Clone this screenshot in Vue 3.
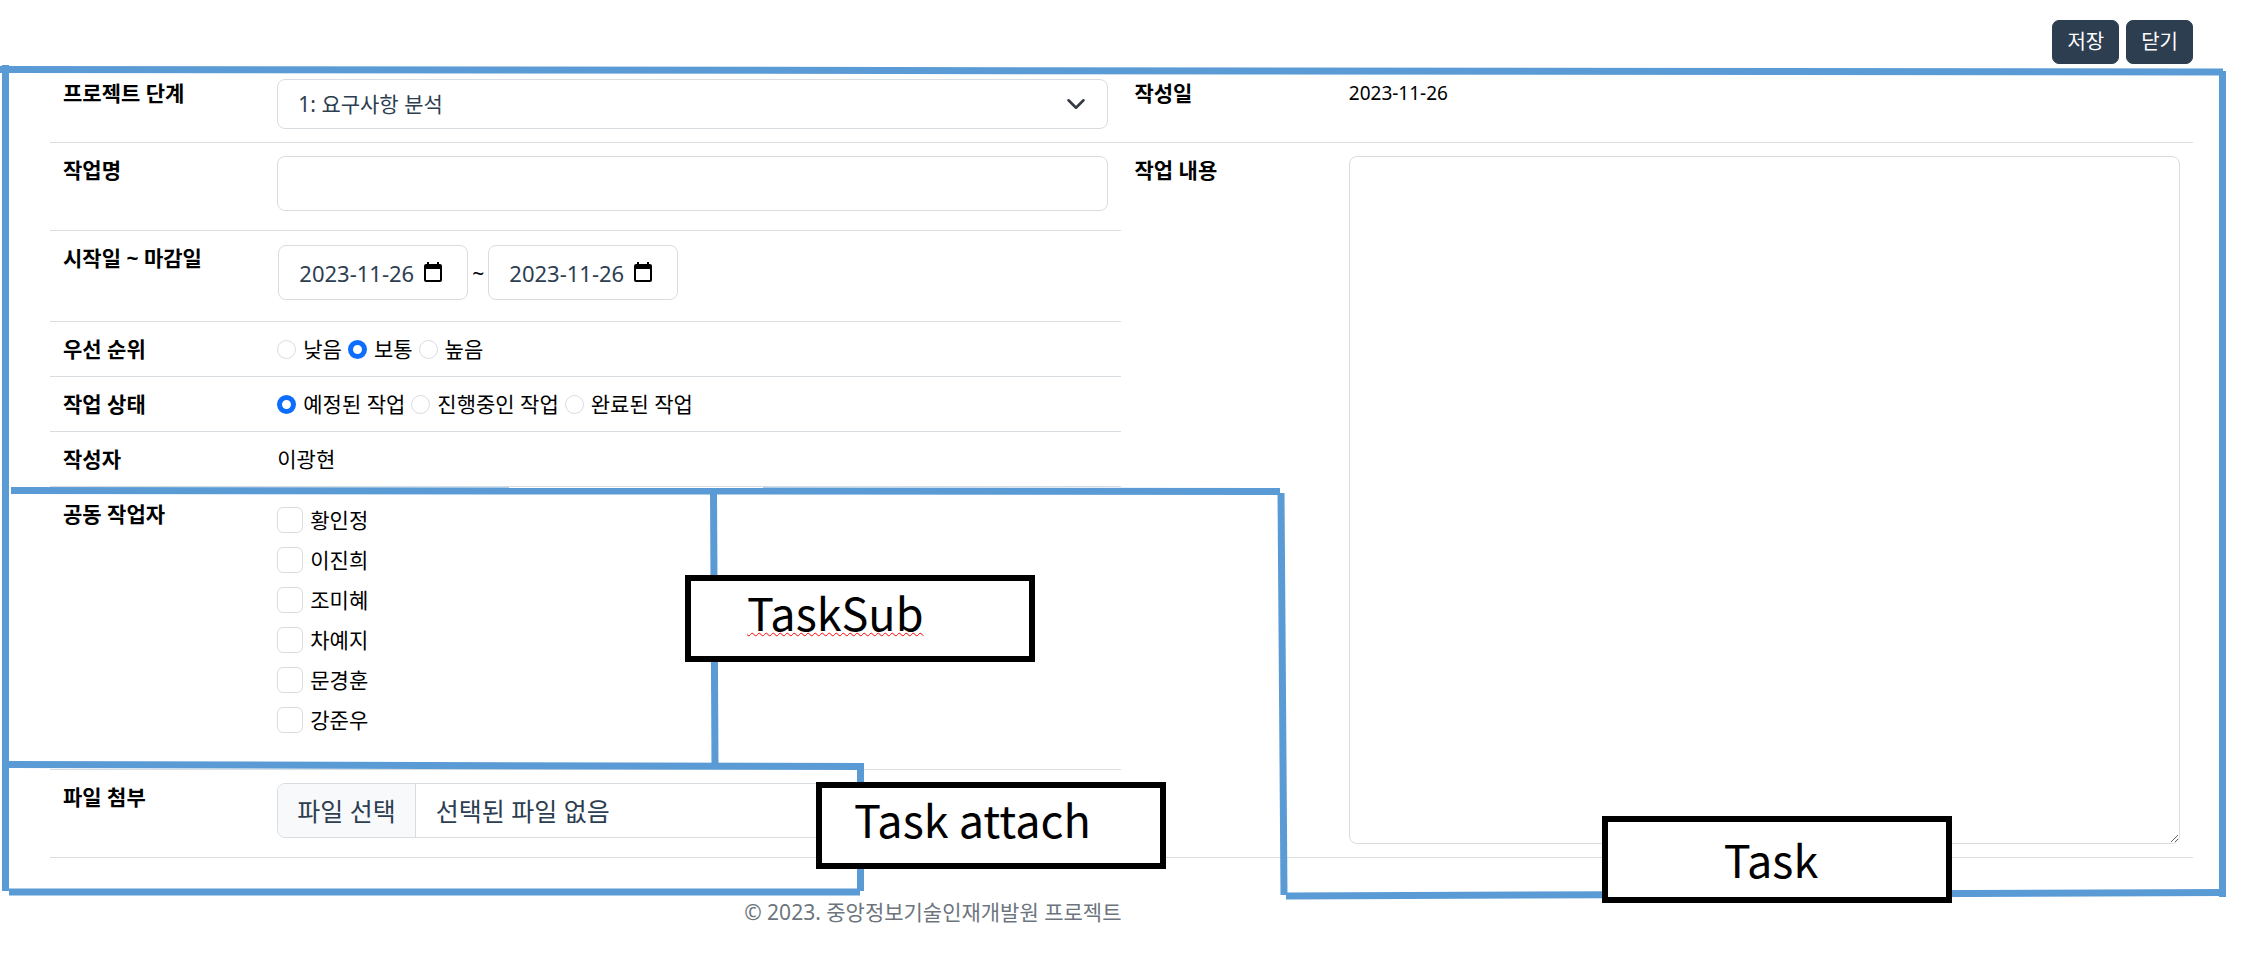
<script setup>
import { ref } from 'vue'

const stage = ref('1')
const title = ref('')
const content = ref('')
const startDate = ref('2023-11-26')
const endDate = ref('2023-11-26')
const priority = ref('보통')
const status = ref('예정된 작업')
const coworkers = ref([])

const priorities = ['낮음', '보통', '높음']
const statuses = ['예정된 작업', '진행중인 작업', '완료된 작업']
const members = ['황인정', '이진희', '조미혜', '차예지', '문경훈', '강준우']
</script>

<template>
  <div class="page">
    <header class="actions">
      <button type="button" class="btn">저장</button>
      <button type="button" class="btn">닫기</button>
    </header>

    <form class="task-form" @submit.prevent>
      <table class="grid">
        <colgroup>
          <col class="col-label" />
          <col class="col-value" />
          <col class="col-label" />
          <col class="col-value" />
        </colgroup>
        <tbody>
          <tr class="row-stage">
            <th scope="row"><label for="stage">프로젝트 단계</label></th>
            <td>
              <div class="select-wrap">
                <select id="stage" v-model="stage" class="control select">
                  <option value="1">1: 요구사항 분석</option>
                </select>
                <svg class="chevron" viewBox="0 0 16 16" aria-hidden="true">
                  <path d="m2 5 6 6 6-6" fill="none" stroke="#343a40" stroke-width="2" stroke-linecap="round" stroke-linejoin="round" />
                </svg>
              </div>
            </td>
            <th scope="row">작성일</th>
            <td class="written">2023-11-26</td>
          </tr>
          <tr class="row-title">
            <th scope="row"><label for="title">작업명</label></th>
            <td><input id="title" v-model="title" type="text" class="control" /></td>
            <th scope="row" rowspan="7"><label for="content">작업 내용</label></th>
            <td rowspan="7"><textarea id="content" v-model="content" class="control area"></textarea></td>
          </tr>
          <tr class="row-dates">
            <th scope="row">시작일 ~ 마감일</th>
            <td>
              <div class="dates">
                <div class="date">
                  <input v-model="startDate" type="text" class="control" aria-label="시작일" />
                  <svg class="calendar" viewBox="0 0 18 20" aria-hidden="true">
                    <path d="M3 0h2v2h8V0h2v2h1a2 2 0 0 1 2 2v14a2 2 0 0 1-2 2H2a2 2 0 0 1-2-2V4a2 2 0 0 1 2-2h1zM2 7v11h14V7z" fill-rule="evenodd" />
                  </svg>
                </div>
                <span class="tilde">~</span>
                <div class="date">
                  <input v-model="endDate" type="text" class="control" aria-label="마감일" />
                  <svg class="calendar" viewBox="0 0 18 20" aria-hidden="true">
                    <path d="M3 0h2v2h8V0h2v2h1a2 2 0 0 1 2 2v14a2 2 0 0 1-2 2H2a2 2 0 0 1-2-2V4a2 2 0 0 1 2-2h1zM2 7v11h14V7z" fill-rule="evenodd" />
                  </svg>
                </div>
              </div>
            </td>
          </tr>
          <tr class="row-line">
            <th scope="row">우선 순위</th>
            <td>
              <div class="radios">
                <label v-for="p in priorities" :key="p" class="choice">
                  <input v-model="priority" type="radio" name="priority" :value="p" />{{ p }}
                </label>
              </div>
            </td>
          </tr>
          <tr class="row-line">
            <th scope="row">작업 상태</th>
            <td>
              <div class="radios">
                <label v-for="s in statuses" :key="s" class="choice">
                  <input v-model="status" type="radio" name="status" :value="s" />{{ s }}
                </label>
              </div>
            </td>
          </tr>
          <tr class="row-line">
            <th scope="row">작성자</th>
            <td>이광현</td>
          </tr>
          <tr class="row-members">
            <th scope="row">공동 작업자</th>
            <td>
              <div class="checks">
                <label v-for="m in members" :key="m" class="choice">
                  <input v-model="coworkers" type="checkbox" :value="m" />{{ m }}
                </label>
              </div>
            </td>
          </tr>
          <tr class="row-file">
            <th scope="row">파일 첨부</th>
            <td>
              <label class="control file">
                <input type="file" class="file-input" />
                <span class="file-button">파일 선택</span>
                <span class="file-name">선택된 파일 없음</span>
              </label>
            </td>
          </tr>
        </tbody>
      </table>
    </form>

    <footer class="footer">© 2023. 중앙정보기술인재개발원 프로젝트</footer>

    <svg class="regions" viewBox="0 0 2265 961" preserveAspectRatio="none" aria-hidden="true">
      <g stroke="#5b9bd5" stroke-width="7">
        <path d="M0 69.5 2223 72" />
        <path d="M5.5 65V891" />
        <path d="M2222.5 71V897" />
        <path d="M11 490.5 1280 491.5" />
        <path d="M1281 493 1284 895" />
        <path d="M713.5 491 715 766" />
        <path d="M9 764.5 864 766.5" />
        <path d="M860.5 763V891" />
        <path d="M9 892H860" />
        <path d="M1286 896 2223 892.5" />
      </g>
    </svg>
    <div class="tag tag-sub"><span class="misspelt">TaskSub</span></div>
    <div class="tag tag-attach">Task attach</div>
    <div class="tag tag-task">Task</div>
  </div>
</template>

<style>
body {
  margin: 0;
  background: #fff;
}
</style>

<style scoped>
.page {
  position: relative;
  box-sizing: border-box;
  padding: 20px 72px 32px 50px;
  font-family: "Noto Sans", "Noto Sans CJK KR", sans-serif;
  font-size: 21px;
  line-height: 28px;
  color: #000;
}
.page * {
  box-sizing: border-box;
}
.actions {
  display: flex;
  justify-content: flex-end;
  gap: 7px;
  margin-bottom: 2px;
}
.btn {
  height: 44px;
  padding: 0 14px;
  border: 1px solid #2c3e50;
  border-radius: 7px;
  background: #2c3e50;
  color: #fff;
  font: inherit;
  font-size: 20px;
}
.grid {
  width: 100%;
  table-layout: fixed;
  border-collapse: separate;
  border-spacing: 0;
}
.col-label {
  width: 10%;
}
.col-value {
  width: 40%;
}
th,
td {
  padding: 13px;
  border-bottom: 1px solid #d8dde2;
  text-align: left;
  vertical-align: top;
  font-weight: 400;
}
th {
  font-weight: 700;
}
.written {
  font-size: 19px;
}
.row-stage {
  height: 77px;
}
.row-title {
  height: 88px;
}
.row-dates {
  height: 91px;
}
.row-line {
  height: 55px;
}
.row-members {
  height: 283px;
}
.row-file {
  height: 88px;
}
.control {
  display: block;
  width: 100%;
  height: 55px;
  padding: 0 20px;
  border: 1px solid #d8dde2;
  border-radius: 8px;
  background: #fff;
  color: #2c3e50;
  font: inherit;
  font-size: 22px;
}
.select-wrap,
.date {
  position: relative;
}
.select {
  height: 50px;
  appearance: none;
  font-size: 21px;
}
.chevron {
  position: absolute;
  top: 15px;
  right: 22px;
  width: 20px;
  height: 20px;
  pointer-events: none;
}
.area {
  height: 688px;
  padding: 12px 20px;
}
.dates {
  display: flex;
  align-items: center;
  padding: 1px;
}
.date {
  width: 190px;
}
.tilde {
  width: 20px;
  text-align: center;
}
.calendar {
  position: absolute;
  top: 17px;
  right: 26px;
  width: 18px;
  height: 20px;
}
.radios {
  display: flex;
  gap: 6px;
}
.choice {
  display: flex;
  align-items: center;
  gap: 7px;
}
.choice input {
  flex: none;
  appearance: none;
  margin: 0;
  border: 1px solid #d8dde2;
  background: #fff;
}
.radios input {
  width: 19px;
  height: 19px;
  border-radius: 50%;
}
.radios input:checked {
  border: 5px solid #0d6efd;
}
.checks {
  display: flex;
  flex-direction: column;
  gap: 12px;
  padding-top: 6px;
}
.checks input {
  width: 26px;
  height: 26px;
  border-radius: 6px;
}
.checks input:checked {
  border-color: #0d6efd;
  background: #0d6efd;
}
.file {
  display: flex;
  align-items: center;
  padding: 0;
  overflow: hidden;
}
.file-input {
  position: absolute;
  width: 1px;
  height: 1px;
  opacity: 0;
}
.file-button {
  display: flex;
  align-items: center;
  height: 100%;
  padding: 0 19px;
  border-right: 1px solid #d8dde2;
  background: #f8f9fa;
}
.file-name {
  padding-left: 20px;
}
.file-button,
.file-name {
  font-size: 25px;
}
.footer {
  width: 50%;
  margin-top: 40px;
  text-align: right;
  color: #6c757d;
}
.regions {
  position: absolute;
  top: 0;
  left: 0;
  width: 100%;
  height: 961px;
  fill: none;
  pointer-events: none;
}
.tag {
  position: absolute;
  width: 350px;
  height: 87px;
  border: 6px solid #000;
  background: #fff;
  font-family: "Noto Sans CJK KR", sans-serif;
  font-size: 45px;
  line-height: 62px;
}
.tag-sub {
  top: 575px;
  left: 685px;
  padding-left: 56px;
}
.tag-attach {
  top: 782px;
  left: 816px;
  padding-left: 32px;
}
.tag-task {
  top: 816px;
  left: 1602px;
  padding: 6px 12px 0 0;
  text-align: center;
}
.misspelt {
  text-decoration: underline wavy #f00 1px;
  text-underline-offset: 1px;
  text-decoration-skip-ink: none;
}
</style>
